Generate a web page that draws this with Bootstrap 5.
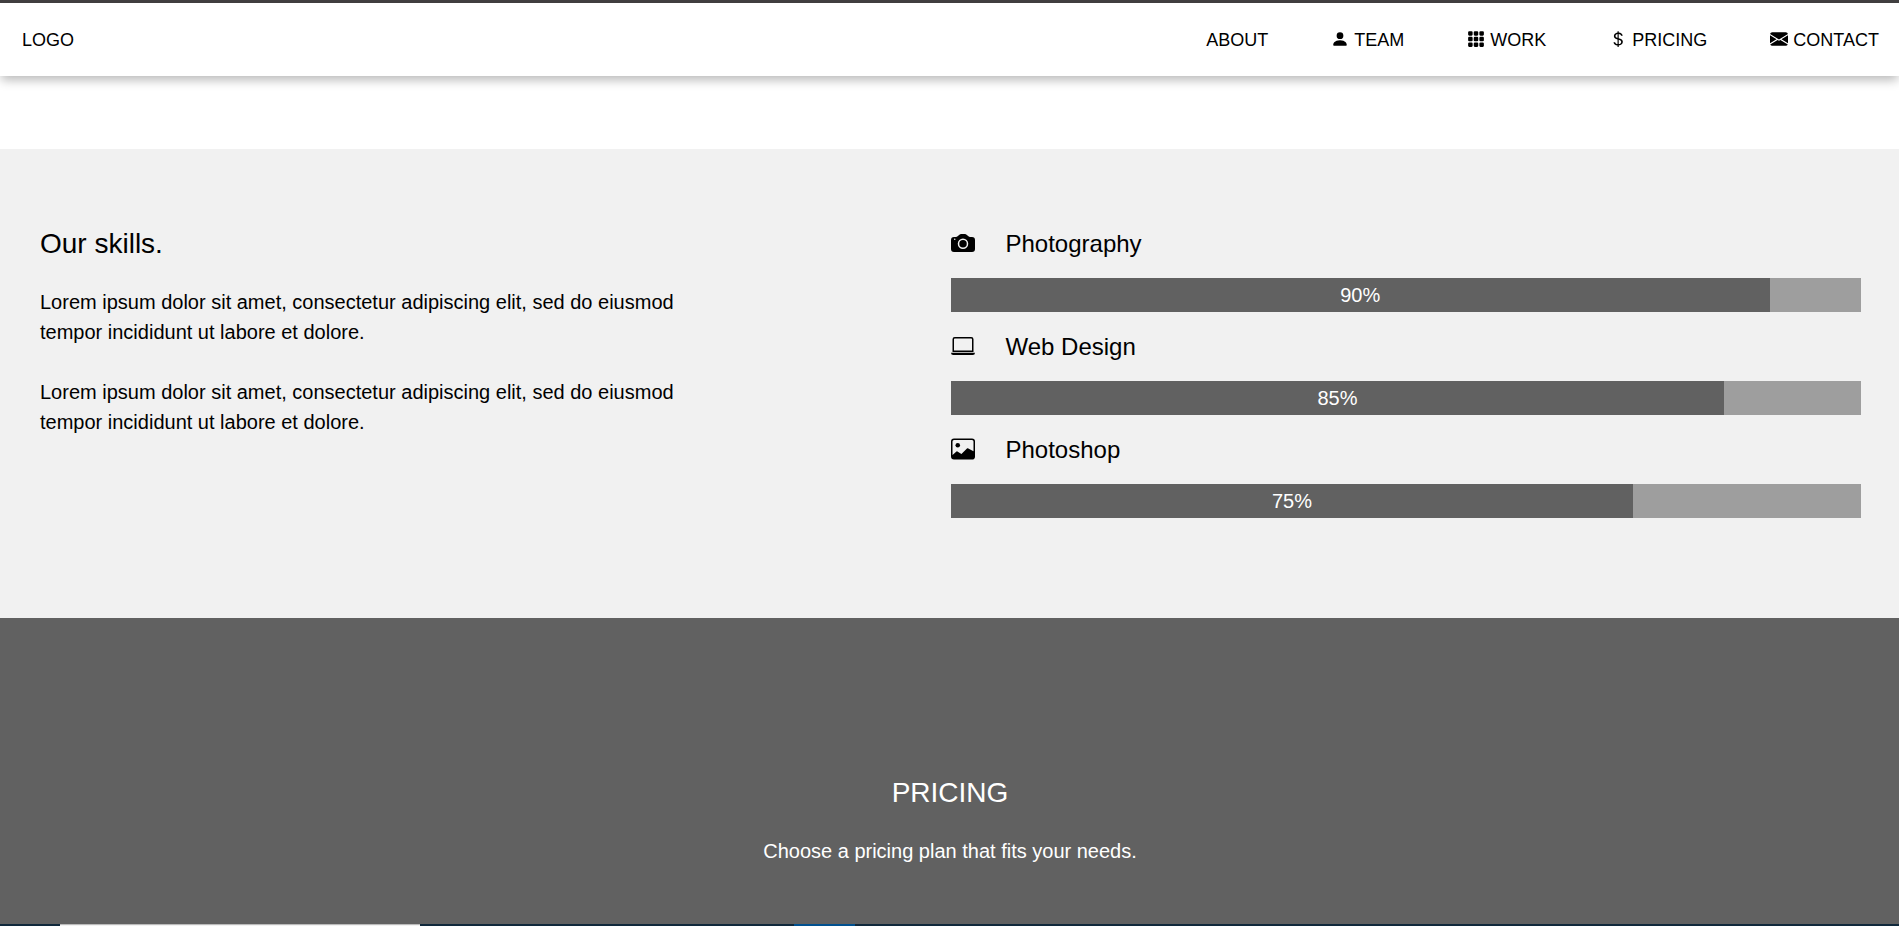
<!DOCTYPE html>
<html lang="en">
<head>
<meta charset="utf-8">
<meta name="viewport" content="width=device-width, initial-scale=1">
<title>Skills and pricing</title>
<link href="https://cdn.jsdelivr.net/npm/bootstrap@5.3.0/dist/css/bootstrap.min.css" rel="stylesheet">
<style>
  body { font-family: "Liberation Sans", Arial, sans-serif; font-size: 20px; line-height: 30px; color: #000; }
  .site-header { border-top: 3px solid #424041; }
  .site-nav { padding: 24px 20px 22px 22px; font-size: 18px; line-height: 27px; box-shadow: 0 5px 10px -1px rgba(0, 0, 0, .28); }
  .site-nav a { color: #000; text-decoration: none; }
  .nav-items { gap: 8px 63px; }
  .nav-items a { display: flex; align-items: center; gap: 5px; }
  .nav-items svg { width: 18px; height: 18px; margin-bottom: 3px; }
  .site-gap { height: 73px; }
  .skills { background: #f1f1f1; padding: 74px 38px 100px 40px; }
  .section-title { font-size: 28px; line-height: 42px; margin-bottom: 22px; font-weight: 400; }
  .skills-copy { max-width: 640px; }
  .skills-copy p { margin-bottom: 30px; }
  .skill-list { display: grid; gap: 17px; padding-top: 3px; }
  .skill-name { font-size: 24px; line-height: 36px; gap: 31px; margin-bottom: 16px; font-weight: 400; }
  .skill-name svg { width: 24px; height: 24px; margin-bottom: 2px; }
  .skill-track { --bs-progress-height: 34px; --bs-progress-font-size: 20px; --bs-progress-bg: #9e9e9e; --bs-progress-bar-bg: #616161; --bs-progress-border-radius: 0; }
  .pricing { background: #616161; color: #fff; padding: 154px 15px 56px 16px; }
  .edge-strip { display: grid; grid-template-columns: 60fr 360fr 374fr 61fr 1044fr; height: 2px; background: #10283b; }
  .edge-light { background: #f2f2f2; border-top: 1px solid #bbb; }
  .edge-blue { background: #00508f; }
</style>
</head>
<body class="d-flex flex-column min-vh-100">
<header class="site-header">
  <nav class="site-nav d-flex flex-wrap justify-content-between align-items-center">
    <a href="#">LOGO</a>
    <ul class="nav-items list-unstyled d-flex flex-wrap mb-0">
      <li><a href="#about">ABOUT</a></li>
      <li><a href="#team"><svg viewBox="0 0 16 16" fill="currentColor" aria-hidden="true"><path d="M3 14s-1 0-1-1 1-4 6-4 6 3 6 4-1 1-1 1H3zm5-6a3 3 0 1 0 0-6 3 3 0 0 0 0 6z"/></svg>TEAM</a></li>
      <li><a href="#work"><svg viewBox="0 0 16 16" fill="currentColor" aria-hidden="true"><path d="M1 2a1 1 0 0 1 1-1h2a1 1 0 0 1 1 1v2a1 1 0 0 1-1 1H2a1 1 0 0 1-1-1V2zm5 0a1 1 0 0 1 1-1h2a1 1 0 0 1 1 1v2a1 1 0 0 1-1 1H7a1 1 0 0 1-1-1V2zm5 0a1 1 0 0 1 1-1h2a1 1 0 0 1 1 1v2a1 1 0 0 1-1 1h-2a1 1 0 0 1-1-1V2zM1 7a1 1 0 0 1 1-1h2a1 1 0 0 1 1 1v2a1 1 0 0 1-1 1H2a1 1 0 0 1-1-1V7zm5 0a1 1 0 0 1 1-1h2a1 1 0 0 1 1 1v2a1 1 0 0 1-1 1H7a1 1 0 0 1-1-1V7zm5 0a1 1 0 0 1 1-1h2a1 1 0 0 1 1 1v2a1 1 0 0 1-1 1h-2a1 1 0 0 1-1-1V7zM1 12a1 1 0 0 1 1-1h2a1 1 0 0 1 1 1v2a1 1 0 0 1-1 1H2a1 1 0 0 1-1-1v-2zm5 0a1 1 0 0 1 1-1h2a1 1 0 0 1 1 1v2a1 1 0 0 1-1 1H7a1 1 0 0 1-1-1v-2zm5 0a1 1 0 0 1 1-1h2a1 1 0 0 1 1 1v2a1 1 0 0 1-1 1h-2a1 1 0 0 1-1-1v-2z"/></svg>WORK</a></li>
      <li><a href="#pricing"><svg viewBox="0 0 16 16" fill="currentColor" aria-hidden="true"><path d="M4 10.781c.148 1.667 1.513 2.85 3.591 3.003V15h1.043v-1.216c2.27-.179 3.678-1.438 3.678-3.3 0-1.59-.947-2.51-2.956-3.028l-.722-.187V3.467c1.122.11 1.879.714 2.07 1.616h1.47c-.166-1.6-1.54-2.748-3.54-2.875V1H7.591v1.233c-1.939.23-3.27 1.472-3.27 3.156 0 1.454.966 2.483 2.661 2.917l.61.162v4.031c-1.149-.17-1.94-.8-2.131-1.718H4zm3.391-3.836c-1.043-.263-1.6-.825-1.6-1.616 0-.944.704-1.641 1.8-1.828v3.495l-.2-.05zm1.591 1.872c1.287.323 1.852.859 1.852 1.769 0 1.097-.826 1.828-2.2 1.939V8.73l.348.086z"/></svg>PRICING</a></li>
      <li><a href="#contact"><svg viewBox="0 0 16 16" fill="currentColor" aria-hidden="true"><path d="M.05 3.555A2 2 0 0 1 2 2h12a2 2 0 0 1 1.95 1.555L8 8.414.05 3.555zM0 4.697v7.104l5.803-3.558L0 4.697zM6.761 8.83l-6.57 4.027A2 2 0 0 0 2 14h12a2 2 0 0 0 1.808-1.144l-6.57-4.027L8 9.586l-1.239-.757zm3.436-.586L16 11.801V4.697l-5.803 3.546z"/></svg>CONTACT</a></li>
    </ul>
  </nav>
</header>
<div class="site-gap"></div>
<main class="d-flex flex-column flex-grow-1">
  <section class="skills" id="work">
    <div class="row g-0">
      <div class="col-md-6">
        <div class="skills-copy">
          <h2 class="section-title">Our skills.</h2>
          <p>Lorem ipsum dolor sit amet, consectetur adipiscing elit, sed do eiusmod tempor incididunt ut labore et dolore.</p>
          <p>Lorem ipsum dolor sit amet, consectetur adipiscing elit, sed do eiusmod tempor incididunt ut labore et dolore.</p>
        </div>
      </div>
      <div class="col-md-6 skill-list">
        <div>
          <h3 class="skill-name d-flex align-items-center"><svg viewBox="0 0 16 16" fill="currentColor" aria-hidden="true"><path d="M10.500 8.500a2.500 2.500 0 1 1-5 0 2.500 2.500 0 0 1 5 0z"/><path d="M2 4a2 2 0 0 0-2 2v6a2 2 0 0 0 2 2h12a2 2 0 0 0 2-2V6a2 2 0 0 0-2-2h-1.172a2 2 0 0 1-1.414-.586l-.828-.828A2 2 0 0 0 9.172 2H6.828a2 2 0 0 0-1.414.586l-.828.828A2 2 0 0 1 3.172 4H2zm.5 2a.5.5 0 1 1 0-1 .5.5 0 0 1 0 1zm9 2.500a3.500 3.500 0 1 1-7 0 3.500 3.500 0 0 1 7 0z"/></svg>Photography</h3>
          <div class="progress skill-track" role="progressbar" aria-label="Photography" aria-valuenow="90" aria-valuemin="0" aria-valuemax="100"><div class="progress-bar" style="width: 90%">90%</div></div>
        </div>
        <div>
          <h3 class="skill-name d-flex align-items-center"><svg viewBox="0 0 16 16" fill="currentColor" aria-hidden="true"><path d="M13.500 3a.5.5 0 0 1 .5.5V11H2V3.500a.5.5 0 0 1 .5-.5h11zm-11-1A1.500 1.500 0 0 0 1 3.500V12h14V3.500A1.500 1.500 0 0 0 13.500 2h-11zM0 12.500h16a1.500 1.500 0 0 1-1.500 1.500h-13A1.500 1.500 0 0 1 0 12.500z"/></svg>Web Design</h3>
          <div class="progress skill-track" role="progressbar" aria-label="Web Design" aria-valuenow="85" aria-valuemin="0" aria-valuemax="100"><div class="progress-bar" style="width: 85%">85%</div></div>
        </div>
        <div>
          <h3 class="skill-name d-flex align-items-center"><svg viewBox="0 0 16 16" fill="currentColor" aria-hidden="true"><path d="M6.002 5.500a1.500 1.500 0 1 1-3 0 1.500 1.500 0 0 1 3 0z"/><path d="M2.002 1a2 2 0 0 0-2 2v10a2 2 0 0 0 2 2h12a2 2 0 0 0 2-2V3a2 2 0 0 0-2-2h-12zm12 1a1 1 0 0 1 1 1v6.500l-3.777-1.947a.5.5 0 0 0-.577.093l-3.710 3.710-2.660-1.772a.5.5 0 0 0-.630.062L1.002 12V3a1 1 0 0 1 1-1h12z"/></svg>Photoshop</h3>
          <div class="progress skill-track" role="progressbar" aria-label="Photoshop" aria-valuenow="75" aria-valuemin="0" aria-valuemax="100"><div class="progress-bar" style="width: 75%">75%</div></div>
        </div>
      </div>
    </div>
  </section>
  <section class="pricing text-center flex-grow-1" id="pricing">
    <h2 class="section-title">PRICING</h2>
    <p class="mb-0">Choose a pricing plan that fits your needs.</p>
  </section>
</main>
<div class="edge-strip" aria-hidden="true"><span></span><span class="edge-light"></span><span></span><span class="edge-blue"></span><span></span></div>
<script src="https://cdn.jsdelivr.net/npm/bootstrap@5.3.0/dist/js/bootstrap.bundle.min.js"></script>
</body>
</html>
